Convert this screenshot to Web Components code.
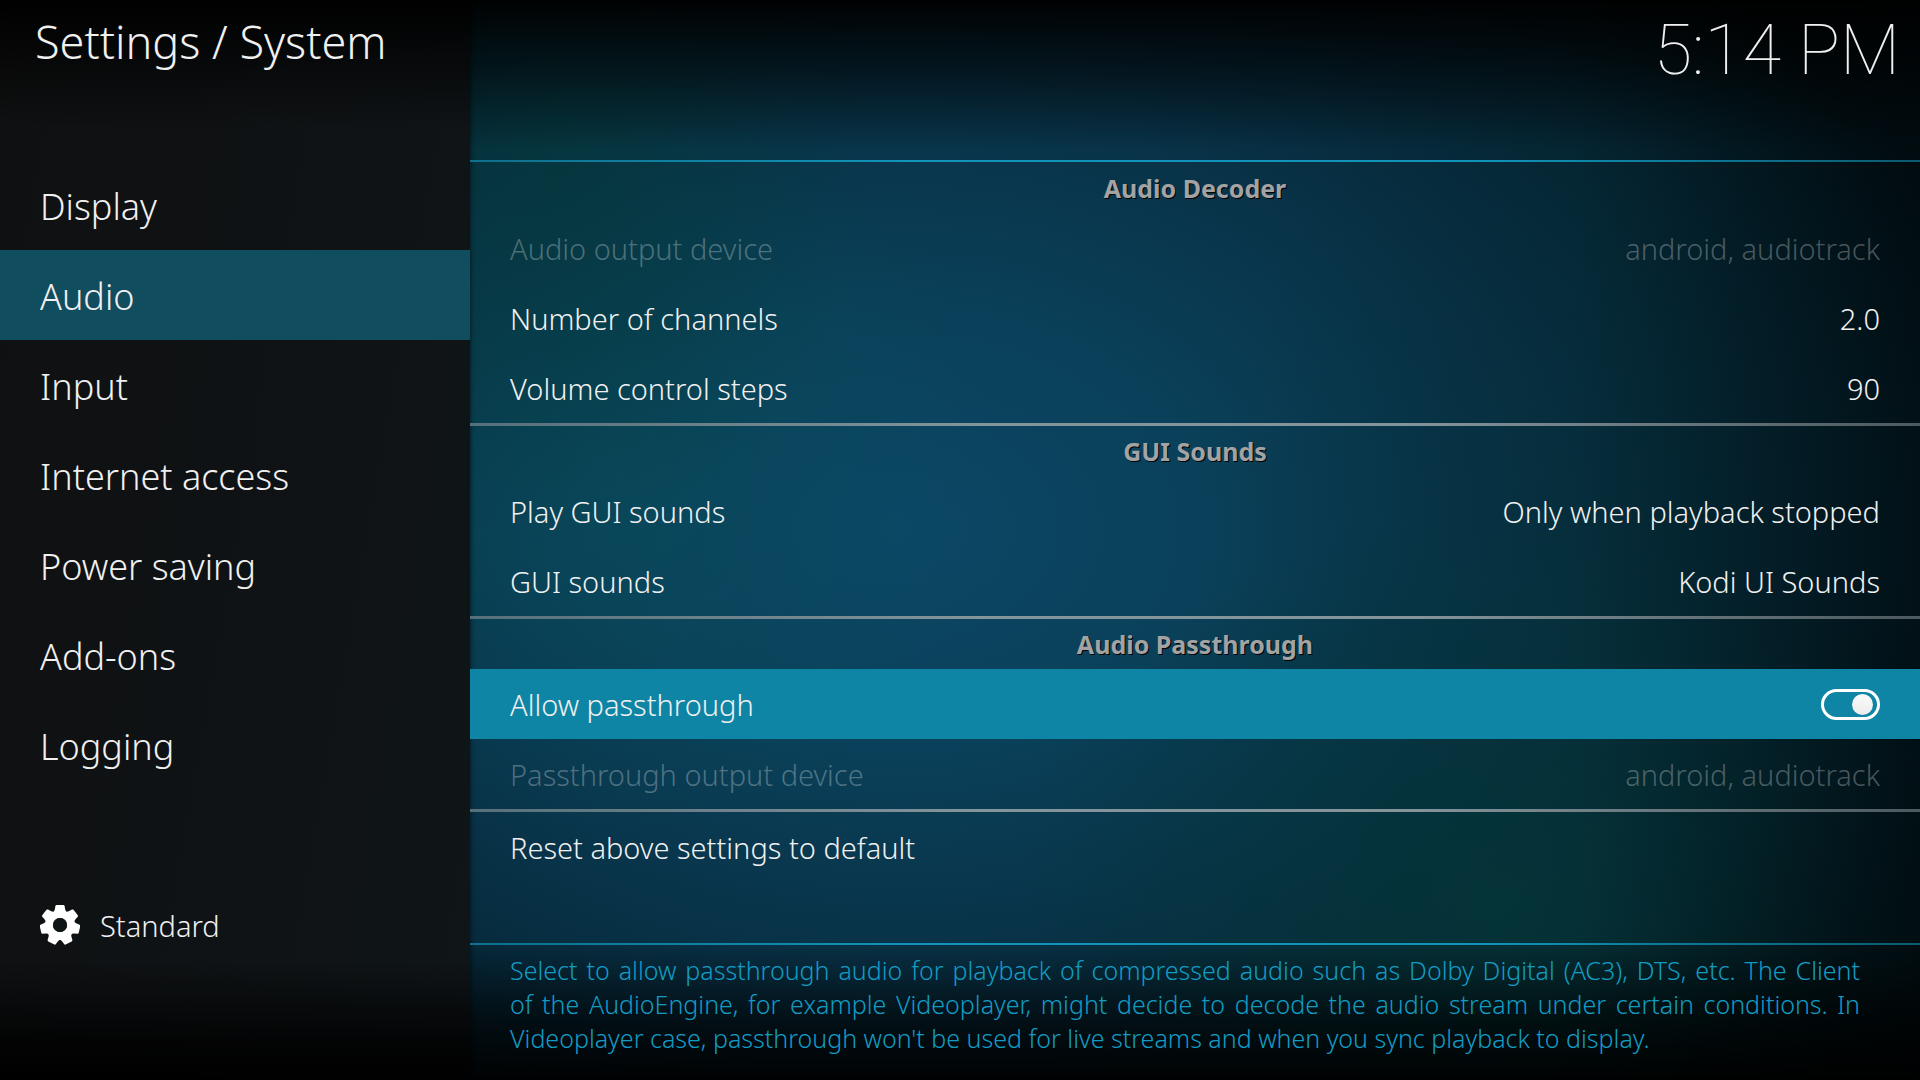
<!DOCTYPE html>
<html lang="en">
<head>
<meta charset="utf-8">
<meta name="viewport" content="width=device-width, initial-scale=1">
<title>Settings / System</title>
<style>
  html, body { margin: 0; min-height: 100%; background: #000; }
  body { font-family: "Noto Sans", sans-serif; font-weight: 300; color: #f0f0f0; }
</style>
</head>
<body>
<kodi-window>
  <kodi-sidebar slot="side" heading="Settings / System">
    <kodi-category>Display</kodi-category>
    <kodi-category active>Audio</kodi-category>
    <kodi-category>Input</kodi-category>
    <kodi-category>Internet access</kodi-category>
    <kodi-category>Power saving</kodi-category>
    <kodi-category>Add-ons</kodi-category>
    <kodi-category>Logging</kodi-category>
    <kodi-level slot="level">Standard</kodi-level>
  </kodi-sidebar>

  <kodi-clock slot="top">5:14 PM</kodi-clock>

  <kodi-group heading="Audio Decoder">
    <kodi-setting value="android, audiotrack" disabled>Audio output device</kodi-setting>
    <kodi-setting value="2.0">Number of channels</kodi-setting>
    <kodi-setting value="90">Volume control steps</kodi-setting>
  </kodi-group>
  <kodi-group heading="GUI Sounds">
    <kodi-setting value="Only when playback stopped">Play GUI sounds</kodi-setting>
    <kodi-setting value="Kodi UI Sounds">GUI sounds</kodi-setting>
  </kodi-group>
  <kodi-group heading="Audio Passthrough">
    <kodi-toggle checked>Allow passthrough</kodi-toggle>
    <kodi-setting value="android, audiotrack" disabled>Passthrough output device</kodi-setting>
  </kodi-group>
  <kodi-group>
    <kodi-setting>Reset above settings to default</kodi-setting>
  </kodi-group>

  <kodi-help slot="help">Select to allow passthrough audio for playback of compressed audio such as Dolby Digital (AC3), DTS, etc. The Client of&nbsp;the AudioEngine, for example Videoplayer, might decide to decode the audio stream under certain conditions. In Videoplayer case, passthrough won't be used for live streams and when you sync playback to display.</kodi-help>
</kodi-window>

<script>
// Window frame: sidebar on the left, settings list on the right
class KodiWindow extends HTMLElement {
  constructor() {
    super();
    const shadow = this.attachShadow({ mode: "open" });
    shadow.innerHTML = `
      <style>
        :host {
          display: grid;
          grid-template-columns: 470px minmax(0, 1fr);
          min-height: 100vh;
          background:
            linear-gradient(180deg, rgba(0,0,0,.95) 0, rgba(0,0,0,.6) 60px, rgba(0,0,0,0) 150px),
            linear-gradient(0deg, rgba(0,0,0,.95) 0, rgba(0,0,0,.65) 60px, rgba(0,0,0,0) 140px),
            linear-gradient(90deg, rgba(0,8,12,0) 82%, rgba(0,8,12,.5) 100%),
            radial-gradient(ellipse 25% 36% at 78% 84%, rgba(4,54,56,.8), rgba(4,54,56,0)),
            radial-gradient(ellipse 20% 60% at 84% 52%, rgba(4,46,54,.5), rgba(4,46,54,0)),
            radial-gradient(ellipse 16% 34% at 29% 16%, rgba(4,56,58,.65), rgba(4,56,58,0)),
            radial-gradient(ellipse 20% 34% at 32% 44%, rgba(8,78,90,.5), rgba(8,78,90,0)),
            radial-gradient(ellipse 58% 74% at 47% 49%, #0b4766 0%, #0a4059 28%, #083146 55%, #04202d 82%, #021015 100%);
        }
        main {
          display: flex;
          flex-direction: column;
          min-width: 0;
          box-shadow: inset 4px 0 4px -3px rgba(0,0,0,.5);
        }
        .top { height: 160px; }
        .line {
          height: 2px;
          background: linear-gradient(90deg, #0e708c, #1193ba 30%, #1193ba 70%, #0b5a70);
        }
        .list { flex: 1; padding-top: 1px; }
        .help { height: 135px; }
      </style>
      <slot name="side"></slot>
      <main>
        <div class="top"><slot name="top"></slot></div>
        <div class="line"></div>
        <div class="list"><slot></slot></div>
        <div class="line"></div>
        <div class="help"><slot name="help"></slot></div>
      </main>
    `;
  }
}
customElements.define("kodi-window", KodiWindow);

class KodiSidebar extends HTMLElement {
  constructor() {
    super();
    const shadow = this.attachShadow({ mode: "open" });
    shadow.innerHTML = `
      <style>
        :host {
          display: flex;
          flex-direction: column;
          background:
            linear-gradient(180deg, #000 0, rgba(0,0,0,0) 130px),
            linear-gradient(0deg, #000 0, rgba(0,0,0,.8) 40px, rgba(0,0,0,0) 120px),
            linear-gradient(100deg, #0f1011, #0f1518);
        }
        h1 {
          height: 160px;
          margin: 0;
          padding: 12px 35px 0;
          box-sizing: border-box;
          font-size: 45px;
          line-height: 60px;
          font-weight: 300;
        }
        nav { flex: 1; }
        footer { padding-bottom: 115px; }
      </style>
      <h1></h1>
      <nav aria-label="Categories"><slot></slot></nav>
      <footer><slot name="level"></slot></footer>
    `;
    shadow.querySelector("h1").textContent = this.getAttribute("heading");
  }
}
customElements.define("kodi-sidebar", KodiSidebar);

class KodiCategory extends HTMLElement {
  constructor() {
    super();
    const shadow = this.attachShadow({ mode: "open" });
    shadow.innerHTML = `
      <style>
        :host { display: block; }
        a {
          display: block;
          padding: 4px 40px 0;
          font-size: 36px;
          line-height: 86px;
          color: inherit;
          text-decoration: none;
        }
        :host([active]) a { background: #104d5e; }
      </style>
      <a href="#"><slot></slot></a>
    `;
    if (this.hasAttribute("active")) {
      shadow.querySelector("a").setAttribute("aria-current", "page");
    }
  }
}
customElements.define("kodi-category", KodiCategory);

// Settings level button with the gear
class KodiLevel extends HTMLElement {
  constructor() {
    super();
    const shadow = this.attachShadow({ mode: "open" });

    let teeth = "";
    for (let i = 0; i < 7; i++) {
      teeth += `<path transform="rotate(${i * 360 / 7})" d="M-3.4-20H3.4Q4.4-20 4.6-19L5.2-15.4Q5.6-13.6 7.4-12.4L6-9H-6L-7.4-12.4Q-5.6-13.6-5.2-15.4L-4.6-19Q-4.4-20-3.4-20Z"/>`;
    }

    shadow.innerHTML = `
      <style>
        :host { display: block; }
        button {
          display: flex;
          align-items: center;
          gap: 20px;
          width: 100%;
          height: 80px;
          padding: 0 40px;
          border: 0;
          background: none;
          font: inherit;
          font-size: 29px;
          color: inherit;
        }
        svg { width: 40px; height: 40px; fill: #fff; }
      </style>
      <button type="button">
        <svg viewBox="-20 -20 40 40" aria-hidden="true">
          ${teeth}
          <circle r="10.5" fill="none" stroke="#fff" stroke-width="7"/>
          <circle r="7" fill="#0f1416"/>
        </svg>
        <span><slot></slot></span>
      </button>
    `;
  }
}
customElements.define("kodi-level", KodiLevel);

class KodiClock extends HTMLElement {
  constructor() {
    super();
    const shadow = this.attachShadow({ mode: "open" });
    shadow.innerHTML = `
      <style>
        :host {
          display: block;
          padding: 9px 20px 0;
          text-align: right;
          font-family: Roboto, sans-serif;
          font-weight: 100;
          font-size: 70px;
          line-height: 82px;
        }
      </style>
      <slot></slot>
    `;
  }
}
customElements.define("kodi-clock", KodiClock);

class KodiGroup extends HTMLElement {
  constructor() {
    super();
    const shadow = this.attachShadow({ mode: "open" });
    const heading = this.getAttribute("heading");
    shadow.innerHTML = `
      <style>
        :host { display: block; }
        :host(:not(:first-of-type))::before {
          content: "";
          display: block;
          height: 3px;
          background: linear-gradient(90deg, #56707a, #84949b 35%, #84949b 65%, #4c5a5f);
        }
        h2 {
          margin: 0;
          font-size: 25px;
          line-height: 50px;
          font-weight: 700;
          text-align: center;
          color: #a3a3a3;
          text-shadow: 1px 1px 0 #000;
        }
      </style>
      ${heading ? `<h2>${heading}</h2>` : ""}
      <slot></slot>
    `;
  }
}
customElements.define("kodi-group", KodiGroup);

class KodiSetting extends HTMLElement {
  constructor() {
    super();
    const shadow = this.attachShadow({ mode: "open" });
    shadow.innerHTML = `
      <style>
        :host { display: block; }
        button {
          display: flex;
          align-items: center;
          justify-content: space-between;
          width: 100%;
          height: 70px;
          padding: 0 40px;
          border: 0;
          background: none;
          font: inherit;
          font-size: 29px;
          color: inherit;
        }
        button:disabled { color: rgba(255,255,255,.28); }
      </style>
      <button type="button"><span><slot></slot></span><span class="value"></span></button>
    `;
    shadow.querySelector(".value").textContent = this.getAttribute("value") || "";
    shadow.querySelector("button").disabled = this.hasAttribute("disabled");
  }
}
customElements.define("kodi-setting", KodiSetting);

class KodiToggle extends HTMLElement {
  constructor() {
    super();
    const shadow = this.attachShadow({ mode: "open" });
    shadow.innerHTML = `
      <style>
        :host { display: block; }
        label {
          display: flex;
          align-items: center;
          justify-content: space-between;
          height: 70px;
          padding: 0 40px;
          font-size: 29px;
          background: #0f85a6;
        }
        input {
          appearance: none;
          display: flex;
          align-items: center;
          box-sizing: border-box;
          width: 59px;
          height: 31px;
          margin: 0;
          padding: 0 4px;
          border: 3px solid #fff;
          border-radius: 16px;
        }
        input::before {
          content: "";
          width: 21px;
          height: 21px;
          border-radius: 50%;
          background: linear-gradient(#fbfbfb, #ececec);
        }
        input:checked { justify-content: flex-end; }
      </style>
      <label for="box"><span><slot></slot></span><input type="checkbox" id="box"></label>
    `;
    shadow.querySelector("input").checked = this.hasAttribute("checked");
  }
}
customElements.define("kodi-toggle", KodiToggle);

class KodiHelp extends HTMLElement {
  constructor() {
    super();
    const shadow = this.attachShadow({ mode: "open" });
    shadow.innerHTML = `
      <style>
        :host {
          display: block;
          padding: 8px 60px 0 40px;
          font-size: 25px;
          line-height: 34px;
          text-align: justify;
          color: #129cc4;
        }
      </style>
      <slot></slot>
    `;
  }
}
customElements.define("kodi-help", KodiHelp);
</script>
</body>
</html>
